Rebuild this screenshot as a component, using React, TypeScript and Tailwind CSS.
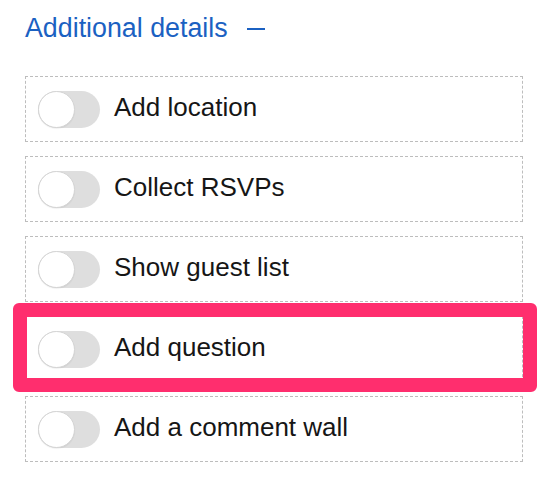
import React from "react";

const items = [
  "Add location",
  "Collect RSVPs",
  "Show guest list",
  "Add question",
  "Add a comment wall",
];

function Toggle() {
  return (
    <div className="flex h-[37px] w-[62px] shrink-0 items-center rounded-full bg-[#dedede]">
      <div className="h-[37px] w-[37px] rounded-full border border-[#d4d4d4] bg-white shadow-[0_1px_1px_rgba(0,0,0,0.06)]" />
    </div>
  );
}

export default function App() {
  return (
    <div
      className="min-h-[486px] w-[545px] bg-white pt-[13px]"
      style={{ fontFamily: '"Liberation Sans", Arial, sans-serif' }}
    >
      <div className="ml-[25px] flex h-[30px] items-center">
        <span className="text-[26.8px] leading-[30px] text-[#1b61c2]">Additional details</span>
        <span className="ml-[19px] mt-[1px] block h-[2px] w-[18px] bg-[#1b61c2]" />
      </div>
      <div className="ml-[25px] mt-[33px] flex w-[498px] flex-col gap-[14px]">
        {items.map((label, i) => (
          <div
            key={label}
            className="relative flex h-[66px] items-center border border-dashed border-[#bdbdbd] pl-[12px]"
          >
            <Toggle />
            <span className="mb-[5px] ml-[14px] text-[26px] leading-[30px] text-[#161616]">{label}</span>
            {i === 3 && (
              <div className="pointer-events-none absolute left-[-13px] top-[-14px] h-[89px] w-[524px] rounded-[6px] border-[14px] border-[#ff2e6e]" />
            )}
          </div>
        ))}
      </div>
    </div>
  );
}
